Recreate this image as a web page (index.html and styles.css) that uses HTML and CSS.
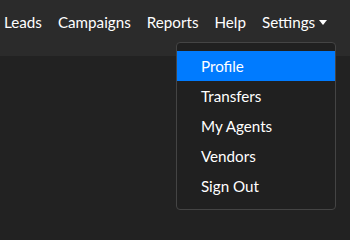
FILE: index.html
```html
<!DOCTYPE html>
<html>
<head>
<meta charset="utf-8">
<link rel="stylesheet" href="styles.css">
</head>
<body>
<nav class="navbar">
  <ul class="nav">
    <li><a class="nav-link">Leads</a></li>
    <li><a class="nav-link">Campaigns</a></li>
    <li><a class="nav-link">Reports</a></li>
    <li><a class="nav-link">Help</a></li>
    <li class="dropdown">
      <a class="nav-link dropdown-toggle">Settings</a>
      <div class="dropdown-menu">
        <a class="dropdown-item active">Profile</a>
        <a class="dropdown-item">Transfers</a>
        <a class="dropdown-item">My Agents</a>
        <a class="dropdown-item">Vendors</a>
        <a class="dropdown-item">Sign Out</a>
      </div>
    </li>
  </ul>
</nav>
</body>
</html>
```
FILE: styles.css
```css
* { box-sizing: border-box; }
html, body {
  margin: 0;
  height: 100%;
  background: #222222;
  font-family: Lato, "Noto Sans", sans-serif;
  font-size: 15.2px;
  line-height: 24px;
  color: #ffffff;
}
.navbar {
  height: 56px;
  background: #2b2b2b;
  padding: 10px 0 0 4px;
}
.nav {
  list-style: none;
  margin: 0;
  padding: 0;
  display: flex;
  gap: 16px;
}
.nav li { position: relative; }
.nav-link {
  display: block;
  color: #ffffff;
  white-space: nowrap;
}
.dropdown-toggle::after {
  content: "";
  display: inline-block;
  margin-left: 4px;
  vertical-align: 3px;
  border-top: 5px solid #ffffff;
  border-left: 4px solid transparent;
  border-right: 4px solid transparent;
}
.dropdown-menu {
  position: absolute;
  top: 32px;
  left: -86px;
  width: 160px;
  padding: 8px 0;
  background: #202020;
  border: 1px solid #444444;
  border-radius: 4px;
  display: flex;
  flex-direction: column;
}
.dropdown-item {
  display: block;
  padding: 3px 24px;
  color: #ffffff;
  white-space: nowrap;
}
.dropdown-item.active { background: #007bff; }
```
